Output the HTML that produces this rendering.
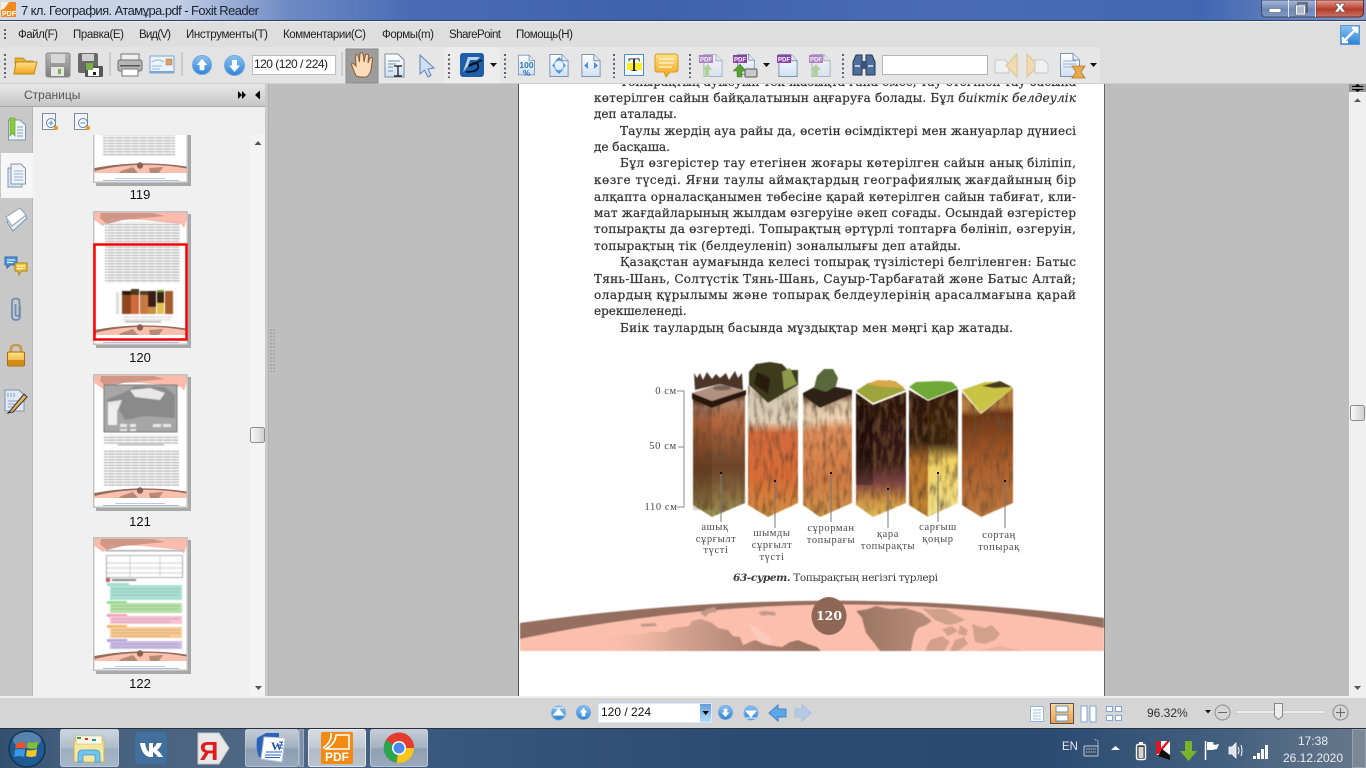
<!DOCTYPE html>
<html lang="ru"><head><meta charset="utf-8"><title>Foxit Reader</title>
<style>
html,body{margin:0;padding:0;width:1366px;height:768px;overflow:hidden;background:#bebebe}
svg{position:absolute;left:0;top:0;display:block;font-family:"Liberation Sans","DejaVu Sans",sans-serif}
.m{font-size:11.5px;fill:#222}
.p{font-family:"DejaVu Serif","Liberation Serif",serif;font-size:12px;fill:#333;stroke:#333;stroke-width:.22px}
.s{font-family:"Liberation Serif","DejaVu Serif",serif;font-size:10.5px;fill:#4a4a4a;text-anchor:middle;letter-spacing:.6px}
.n{font-size:13px;fill:#111;text-anchor:middle}
</style></head><body>
<svg width="1366" height="768" viewBox="0 0 1366 768" xmlns="http://www.w3.org/2000/svg">
<defs>
<linearGradient id="tb" x1="0" x2="1" y1="0" y2="0"><stop offset="0" stop-color="#d3dbea"/><stop offset=".13" stop-color="#c3cfe5"/><stop offset=".21" stop-color="#6f8bc4"/><stop offset=".3" stop-color="#4a6cb6"/><stop offset=".47" stop-color="#3f62ad"/><stop offset=".7" stop-color="#4a6cb7"/><stop offset=".88" stop-color="#4167b3"/><stop offset="1" stop-color="#8097c5"/></linearGradient>
<linearGradient id="hd" x1="0" x2="0" y1="0" y2="1"><stop offset="0" stop-color="#e8e8e8"/><stop offset="1" stop-color="#c6c6c6"/></linearGradient>
<linearGradient id="tk" x1="0" x2="1" y1="0" y2="0"><stop offset="0" stop-color="#33506f"/><stop offset=".05" stop-color="#455f7d"/><stop offset=".2" stop-color="#4f6884"/><stop offset=".33" stop-color="#38577f"/><stop offset=".55" stop-color="#2c4a72"/><stop offset=".76" stop-color="#2b4a72"/><stop offset=".9" stop-color="#44607f"/><stop offset="1" stop-color="#69798b"/></linearGradient>
<linearGradient id="gl" x1="0" x2="0" y1="0" y2="1"><stop offset="0" stop-color="#fff" stop-opacity=".55"/><stop offset=".5" stop-color="#fff" stop-opacity=".28"/><stop offset=".52" stop-color="#fff" stop-opacity=".12"/><stop offset="1" stop-color="#fff" stop-opacity=".22"/></linearGradient>
<linearGradient id="bl" x1="0" x2="0" y1="0" y2="1"><stop offset="0" stop-color="#8cc2f2"/><stop offset="1" stop-color="#2d83d8"/></linearGradient>
<linearGradient id="bl2" x1="0" x2="0" y1="0" y2="1"><stop offset="0" stop-color="#2f7fd0"/><stop offset="1" stop-color="#9fd0f6"/></linearGradient>
<linearGradient id="doc" x1="0" x2="0" y1="0" y2="1"><stop offset="0" stop-color="#fff"/><stop offset="1" stop-color="#cfe0f4"/></linearGradient>
<linearGradient id="yl" x1="0" x2="0" y1="0" y2="1"><stop offset="0" stop-color="#ffe28a"/><stop offset="1" stop-color="#efa51c"/></linearGradient>
<linearGradient id="gr" x1="0" x2="0" y1="0" y2="1"><stop offset="0" stop-color="#b6b6b6"/><stop offset="1" stop-color="#7d7d7d"/></linearGradient>
<linearGradient id="org" x1="0" x2="0" y1="0" y2="1"><stop offset="0" stop-color="#ffd79a"/><stop offset="1" stop-color="#f79b36"/></linearGradient>
<linearGradient id="cl" x1="0" x2="0" y1="0" y2="1"><stop offset="0" stop-color="#e2a49a"/><stop offset=".55" stop-color="#b63a2a"/><stop offset="1" stop-color="#c8766a"/></linearGradient>
<linearGradient id="wb" x1="0" x2="0" y1="0" y2="1"><stop offset="0" stop-color="#aabbdc"/><stop offset=".55" stop-color="#6e87b4"/><stop offset="1" stop-color="#7f99c8"/></linearGradient>
<linearGradient id="sb" x1="0" x2="1" y1="0" y2="0"><stop offset="0" stop-color="#fafafa"/><stop offset="1" stop-color="#cfcfcf"/></linearGradient>
<linearGradient id="land" x1="0" x2="1" y1="0" y2="0"><stop offset="0" stop-color="#fbbfae" stop-opacity=".1"/><stop offset=".35" stop-color="#d8a593"/><stop offset=".75" stop-color="#a97d6c"/><stop offset="1" stop-color="#96705f"/></linearGradient>
<linearGradient id="gld" x1="0" x2="1" y1="0" y2="0"><stop offset="0" stop-color="#9c7463"/><stop offset="1" stop-color="#b88e7c"/></linearGradient>
<linearGradient id="c1" x1="0" x2="0" y1="0" y2="1"><stop offset="0" stop-color="#3a1d10"/><stop offset=".08" stop-color="#b0826a"/><stop offset=".22" stop-color="#b5683f"/><stop offset=".6" stop-color="#6d4429"/><stop offset=".85" stop-color="#8c7443"/><stop offset="1" stop-color="#a09a5c"/></linearGradient>
<linearGradient id="c2" x1="0" x2="0" y1="0" y2="1"><stop offset="0" stop-color="#cfc4ac"/><stop offset=".28" stop-color="#dfd0b8"/><stop offset=".36" stop-color="#d36b3c"/><stop offset=".7" stop-color="#d96d37"/><stop offset="1" stop-color="#d39040"/></linearGradient>
<linearGradient id="c3" x1="0" x2="0" y1="0" y2="1"><stop offset="0" stop-color="#5d4028"/><stop offset=".08" stop-color="#dcc2a4"/><stop offset=".2" stop-color="#efd7b8"/><stop offset=".3" stop-color="#dc8b58"/><stop offset=".7" stop-color="#d17c45"/><stop offset="1" stop-color="#cf9548"/></linearGradient>
<linearGradient id="c4" x1="0" x2="0" y1="0" y2="1"><stop offset="0" stop-color="#2b1410"/><stop offset=".55" stop-color="#331a14"/><stop offset=".72" stop-color="#7d4146"/><stop offset=".85" stop-color="#c98c42"/><stop offset="1" stop-color="#e0bb55"/></linearGradient>
<linearGradient id="c5a" x1="0" x2="0" y1="0" y2="1"><stop offset="0" stop-color="#2c180c"/><stop offset=".4" stop-color="#2f1a0d"/><stop offset=".55" stop-color="#b47028"/><stop offset="1" stop-color="#c88a35"/></linearGradient>
<linearGradient id="c5b" x1="0" x2="0" y1="0" y2="1"><stop offset="0" stop-color="#331d10"/><stop offset=".42" stop-color="#3a2210"/><stop offset=".55" stop-color="#f0d060"/><stop offset="1" stop-color="#efe08a"/></linearGradient>
<linearGradient id="c6" x1="0" x2="0" y1="0" y2="1"><stop offset="0" stop-color="#b9803c"/><stop offset=".14" stop-color="#b17a3c"/><stop offset=".2" stop-color="#6d3516"/><stop offset=".55" stop-color="#a95c2a"/><stop offset="1" stop-color="#c27b40"/></linearGradient>
<filter id="soil" x="0" y="0" width="1" height="1"><feTurbulence type="fractalNoise" baseFrequency=".22 .06" numOctaves="3" seed="4" result="t"/><feColorMatrix in="t" type="matrix" values="0 0 0 0 .15  0 0 0 0 .07  0 0 0 0 .03  2.2 0 0 0 -.95" result="d"/><feComposite in="d" in2="SourceGraphic" operator="in" result="c"/><feMerge><feMergeNode in="SourceGraphic"/><feMergeNode in="c"/></feMerge></filter>
<filter id="bt"><feGaussianBlur stdDeviation=".3"/></filter>
<filter id="b1"><feGaussianBlur stdDeviation=".55"/></filter>
<pattern id="tl" width="8" height="2.800" patternUnits="userSpaceOnUse"><rect width="8" height="1.200" fill="#7a7a7a" opacity=".62"/><rect x="3" y="0" width=".8" height="1.200" fill="#fff" opacity=".55"/></pattern>
<symbol id="th" width="100" height="142" viewBox="0 0 100 142" overflow="visible">
<rect x="3" y="3" width="95" height="134" fill="#a8a8a8"/><rect x="0" y="0" width="95" height="134" fill="#c2c2c2"/><rect x="1.500" y="1.500" width="92" height="131" fill="#fff"/>
<path d="M1.500 1.500H93.500V9L91 17L88 13L50 9L18 8L10 15L1.500 9Z" fill="#fcbcad"/><path d="M8 2H60L72 5L30 9L14 13L7 7Z" fill="#c88f7f" opacity=".85"/>
<path d="M1.500 119Q47 111 93.500 118V124H1.500Z" fill="#fbbfae"/><path d="M1.500 119Q47 110.500 93.500 117.500V119.500Q47 111 1.500 122Z" fill="#946d5d"/><circle cx="47" cy="116.500" r="3.200" fill="#8a6052"/><path d="M28 122L40 118L45 124H26ZM56 119L70 118L66 124H57Z" fill="#b78a78"/>
<rect x="22" y="129" width="50" height=".8" fill="#8a9fd0" opacity=".7"/><rect x="10" y="131" width="76" height="1" fill="#8a9fd0" opacity=".7"/>
</symbol>
<symbol id="cu" width="21" height="21" viewBox="0 0 21 21"><circle cx="10.500" cy="10.500" r="10" fill="url(#bl)" stroke="#72a8dc"/><path d="M10.500 4L16 10.500H13V16H8V10.500H5Z" fill="#fff"/></symbol>
<symbol id="cd" width="21" height="21" viewBox="0 0 21 21"><circle cx="10.500" cy="10.500" r="10" fill="url(#bl)" stroke="#72a8dc"/><path d="M10.500 17L16 10.500H13V5H8V10.500H5Z" fill="#fff"/></symbol>
<symbol id="pg" width="20" height="24" viewBox="0 0 20 24"><path d="M.5 .5H13L19.500 7V23.500H.5Z" fill="url(#doc)" stroke="#7c93b2"/><path d="M13 .5V7H19.500" fill="#dfe8f4" stroke="#7c93b2"/></symbol>
<symbol id="pdfb" width="26" height="14" viewBox="0 0 26 14"><rect width="14" height="8" x="0" y="0" fill="#8a3fa8"/><text x="7" y="6.500" font-size="6" font-weight="bold" fill="#fff" text-anchor="middle">PDF</text></symbol>
</defs>

<rect width="1366" height="768" fill="#bebebe"/>

<!-- document page -->
<rect x="518" y="83" width="587" height="615" fill="#fff"/>
<rect x="518" y="83" width="1" height="615" fill="#555"/><rect x="1104" y="83" width="1" height="615" fill="#666"/>

<g filter="url(#bt)">
<text class="p" x="620" y="86" textLength="456">Топырақтың ауысуын тек жазықта ғана емес, тау етегінен тау басына</text>
<text class="p" x="594" y="102" textLength="482">көтерілген сайын  байқалатынын аңғаруға болады. Бұл <tspan font-style="italic">биіктік белдеулік</tspan></text>
<text class="p" x="594" y="118">деп аталады.</text>
<text class="p" x="620" y="135" textLength="456">Таулы жердің ауа райы да, өсетін өсімдіктері мен жануарлар дүниесі</text>
<text class="p" x="594" y="151">де басқаша.</text>
<text class="p" x="620" y="167" textLength="456">Бұл өзгерістер тау етегінен жоғары көтерілген сайын анық біліпіп,</text>
<text class="p" x="594" y="184" textLength="482">көзге түседі. Яғни таулы аймақтардың географиялық жағдайының бір</text>
<text class="p" x="594" y="201" textLength="482">алқапта орналасқанымен төбесіне қарай көтерілген сайын табиғат, кли-</text>
<text class="p" x="594" y="217" textLength="482">мат жағдайларының жылдам өзгеруіне әкеп соғады. Осындай өзгерістер</text>
<text class="p" x="594" y="233" textLength="482">топырақты да өзгертеді. Топырақтың әртүрлі топтарға бөлініп, өзгеруін,</text>
<text class="p" x="594" y="250" textLength="367">топырақтың тік (белдеуленіп) зоналылығы деп атайды.</text>
<text class="p" x="620" y="266" textLength="456">Қазақстан аумағында келесі топырақ түзілістері белгіленген: Батыс</text>
<text class="p" x="594" y="283" textLength="482">Тянь-Шань, Солтүстік Тянь-Шань, Сауыр-Тарбағатай және Батыс Алтай;</text>
<text class="p" x="594" y="299" textLength="482">олардың  құрылымы және топырақ белдеулерінің арасалмағына қарай</text>
<text class="p" x="594" y="315">ерекшеленеді.</text>
<text class="p" x="620" y="332" textLength="393">Биік таулардың басында мұздықтар мен мәңгі қар жатады.</text>
</g>

<!-- soil figure -->
<g filter="url(#b1)">
<g filter="url(#soil)">
<path d="M693 398L712 408V517L693 505Z" fill="url(#c1)"/><path d="M712 408L745 392V503L712 517Z" fill="url(#c1)"/>
<path d="M748 385L768 402V517L748 505Z" fill="url(#c2)"/><path d="M768 402L798 385V503L768 517Z" fill="url(#c2)"/>
<path d="M803 396L820 408V517L803 505Z" fill="url(#c3)"/><path d="M820 408L852 393V503L820 517Z" fill="url(#c3)"/>
<path d="M856 393L873 405V517L856 505Z" fill="url(#c4)"/><path d="M873 405L906 392V503L873 517Z" fill="url(#c4)"/>
<path d="M909 390L928 401V517L909 505Z" fill="url(#c5a)"/><path d="M928 401L958 389V503L928 517Z" fill="url(#c5b)"/>
<path d="M962 392L981 414V517L962 505Z" fill="url(#c6)"/><path d="M981 414L1013 388V503L981 517Z" fill="url(#c6)"/>
</g>
<rect x="693" y="400" width="19" height="110" fill="#301400" opacity=".18"/>
<rect x="856" y="405" width="17" height="80" fill="#0a0200" opacity=".3"/>
<path d="M692 393L720 384L746 391L712 405Z" fill="#b29080"/><path d="M692 393L712 401L746 390V395L712 408L692 399Z" fill="#2a170c"/>
<path d="M694 373L697 378L700 373L703 380L707 372L712 379L716 374L720 378L726 373L729 380L735 371L738 378L742 373L743 390L720 384L695 390Z" fill="#4c3428"/><ellipse cx="722" cy="388" rx="9" ry="2.500" fill="#7a6656"/>
<path d="M749 372L756 364L770 362L782 364L788 370L798 370L798 385L768 403L749 385Z" fill="#3c3a1c"/><path d="M782 372L790 368L797 384L784 390Z" fill="#8c9a4a"/><path d="M757 372L770 378L768 394L754 384Z" fill="#291b10"/>
<path d="M803 393L820 384L852 390V394L820 408L803 396Z" fill="#2f2412"/><path d="M814 388L817 376L824 369L833 369L838 378L836 386L826 392Z" fill="#58673a"/>
<path d="M856 391L868 383L890 380L906 390L873 403Z" fill="#9ca43a"/><path d="M866 384L878 380L895 381L905 388L885 387Z" fill="#d9a948"/>
<path d="M909 387L916 382L940 381L952 382L958 388L928 400Z" fill="#6fa838"/>
<path d="M962 390L985 382L1000 382L1013 388L981 413Z" fill="#c9c445"/><path d="M982 386L1000 381L1012 387L994 388Z" fill="#4b3d1a"/>
</g>
<g filter="url(#bt)">
<path d="M677 391H684V507H677M678 447H684" fill="none" stroke="#888" stroke-width="1"/>
<text class="s" x="666" y="394">0 см</text><text class="s" x="663" y="449">50 см</text><text class="s" x="661" y="510">110 см</text>
<path d="M721 473V522M775 481V528M831 473V522M888 489V528M938 473V522M1005 481V528" stroke="#777" stroke-width="1" fill="none"/>
<path d="M720 472h2v2h-2zM774 480h2v2h-2zM830 472h2v2h-2zM887 488h2v2h-2zM937 472h2v2h-2zM1004 480h2v2h-2z" fill="#111"/>
<text class="s" x="715" y="530">ашық</text><text class="s" x="716" y="542">сұрғылт</text><text class="s" x="716" y="553">түсті</text>
<text class="s" x="772" y="536">шымды</text><text class="s" x="772" y="548">сұрғылт</text><text class="s" x="772" y="560">түсті</text>
<text class="s" x="831" y="531">сұрорман</text><text class="s" x="831" y="543">топырағы</text>
<text class="s" x="888" y="537">қара</text><text class="s" x="888" y="549">топырақты</text>
<text class="s" x="938" y="530">сарғыш</text><text class="s" x="938" y="542">қоңыр</text>
<text class="s" x="999" y="538">сортаң</text><text class="s" x="999" y="550">топырақ</text>
<text x="733" y="581" font-family="'DejaVu Serif','Liberation Serif',serif" font-size="10.500" fill="#3a3a3a" textLength="205"><tspan font-style="italic" font-weight="bold">63-сурет.</tspan> Топырақтың негізгі түрлері</text>
</g>

<!-- page footer -->
<g filter="url(#b1)">
<path d="M520 623Q820 581 1104 618V651H520Z" fill="#fcbfae"/>
<path d="M520 623Q820 581 1104 618V628Q820 576 520 639Z" fill="#946e5e"/>
<path d="M596 640L612 636L627 634L640 635L650 632L666 632L672 628L689 626L692 621L701 619L712 623L718 628L728 630L733 636L740 637L743 645L755 640L768 645L782 647L790 642L798 640L808 644L817 647L821 651H596Z" fill="url(#land)"/>
<path d="M856 611L868 609L876 606L890 609L905 608L922 613L932 621L926 625L918 628L915 633L913 640L911 651H880L874 643L866 633L864 626L862 618Z" fill="url(#gld)"/>
<path d="M922 608L930 609L945 609L958 616L965 620L955 624L948 625L935 620Z" fill="#cfa08c"/>
<path d="M942 629L952 626L958 631L948 636ZM960 625L968 630L966 636L958 634ZM930 640L942 636L950 642L944 651H925ZM955 640L964 637L968 644L958 651H950ZM972 624L984 628L992 625L1000 634L995 640L985 644L975 642Z" fill="#d3a08d"/>
<path d="M975 651L1000 646L1015 649L1022 651Z" fill="#eab3a0"/>
<path d="M700 613L707 609L715 607L717 612L710 613L705 617ZM758 612L766 611L775 612L776 616L768 615L762 616ZM640 624L655 623L657 626L642 627Z" fill="#c39a88"/>
<path d="M748 624L758 628L770 638L772 645L762 645L754 634Z" fill="#fff" opacity=".18"/>
</g>
<ellipse cx="829" cy="616" rx="17.500" ry="19" fill="#8f6757"/>
<text x="829" y="620" font-family="'DejaVu Serif','Liberation Serif',serif" font-weight="bold" font-size="12.500" fill="#fff" text-anchor="middle">120</text>

<!-- right scrollbar -->
<rect x="1349" y="83" width="17" height="615" fill="#efefef"/>
<rect x="1349" y="83" width="17" height="9" fill="#959595"/>
<path d="M1352 86.500H1363M1352 89.500H1363" stroke="#000"/><path d="M1357.500 84L1355 86H1360ZM1357.500 92L1355 90H1360Z" fill="#000"/>
<path d="M1357.500 98.500L1361 102H1354Z" fill="#555"/><path d="M1354 686H1361L1357.500 690Z" fill="#555"/>
<rect x="1350.500" y="405.500" width="14" height="15" rx="2" fill="url(#sb)" stroke="#8d8d8d"/>

<!-- splitter -->
<rect x="265" y="83" width="3" height="615" fill="#c8c8c8"/><rect x="268" y="83" width="1" height="615" fill="#b0b0b0"/>
<path d="M271 329V372M274 329V372" stroke="#8a8a8a" stroke-dasharray="1.500 2"/>

<!-- left panel -->
<rect x="0" y="106" width="33" height="592" fill="#c8c8c8"/>
<rect x="33" y="106" width="232" height="590" fill="#f0f0f0"/>
<rect x="32" y="106" width="1" height="590" fill="#b4b4b4"/>
<rect x="250" y="135" width="15" height="561" fill="#f4f4f4"/>

<use href="#th" x="93" y="49" width="100" height="142"/>
<use href="#th" x="93" y="211" width="100" height="142"/>
<use href="#th" x="93" y="374" width="100" height="142"/>
<use href="#th" x="93" y="537" width="100" height="142"/>
<g filter="url(#b1)">
<rect x="103" y="135" width="72" height="21" fill="url(#tl)"/>
<rect x="105" y="222" width="75" height="61" fill="url(#tl)"/>
</g>
<!-- thumb 120 image -->
<g filter="url(#b1)">
<rect x="122" y="291" width="9" height="23" fill="#8d4a22"/><rect x="122" y="291" width="9" height="4" fill="#2a1a10"/>
<rect x="131" y="289" width="8" height="25" fill="#cf6a3a"/><rect x="131" y="289" width="8" height="6" fill="#4a3a20"/>
<rect x="140" y="291" width="8" height="23" fill="#c67a42"/><rect x="140" y="291" width="8" height="4" fill="#4c4020"/>
<rect x="148" y="291" width="8" height="23" fill="#3a1c12"/><rect x="148" y="307" width="8" height="7" fill="#c89040"/>
<rect x="157" y="291" width="7" height="23" fill="#3a2010"/><rect x="157" y="303" width="7" height="11" fill="#e0c050"/><rect x="157" y="290" width="7" height="2" fill="#6fa030"/>
<rect x="165" y="291" width="8" height="23" fill="#a55c2a"/>
<rect x="116" y="292" width="3" height="22" fill="#ddd"/>
<rect x="122" y="316" width="50" height="5" fill="url(#tl)" opacity=".5"/>
<rect x="125" y="321" width="36" height="1.500" fill="#888" opacity=".6"/>
</g>
<rect x="94.500" y="244.500" width="92" height="95" fill="none" stroke="#f00" stroke-width="2.500"/>
<!-- thumb 121 -->
<g filter="url(#b1)">
<rect x="104" y="385" width="73" height="47" fill="#a6a6a6" stroke="#777"/>
<path d="M106 400L125 392L135 386L165 387L175 395V418L145 416L125 420L118 408Z" fill="#8a8a8a"/>
<path d="M130 390L150 388L165 393L160 400L135 397ZM108 402L122 400L118 410H108Z" fill="#e8e8e8"/>
<path d="M108 405H117V425H108Z" fill="#eee"/>
<path d="M120 424h7v3h-7zM130 424h6v3h-6zM153 424h8v3h-8zM163 424h8v3h-8zM120 429h7v2h-7zM130 429h6v2h-6z" fill="#e8e8e8"/>
<rect x="104" y="435" width="74" height="10" fill="url(#tl)"/>
<rect x="118" y="444" width="46" height="1.500" fill="#777" opacity=".5"/>
<rect x="104" y="450" width="75" height="37" fill="url(#tl)"/>
</g>
<!-- thumb 122 -->
<g filter="url(#b1)">
<rect x="105" y="550" width="78" height="1.500" fill="#888" opacity=".7"/>
<rect x="106.500" y="555.500" width="76" height="22" fill="#fff" stroke="#aaa"/>
<path d="M130 556V577M160 556V577M107 563H182M107 568H182M107 573H182" stroke="#bbb" stroke-width=".7"/>
<rect x="106" y="578" width="4" height="4" fill="#c06060"/><rect x="112" y="579" width="24" height="2" fill="#888"/>
<rect x="107" y="583" width="22" height="3" fill="#a3dccb"/><rect x="110" y="585" width="72" height="15" fill="#a9e2d4"/>
<rect x="107" y="601" width="20" height="3" fill="#8fdc86"/><rect x="110" y="603" width="72" height="10" fill="#b5e2a6"/>
<rect x="107" y="614" width="20" height="3" fill="#f59cc0"/><rect x="110" y="616" width="72" height="8" fill="#f9bfd2"/>
<rect x="107" y="625" width="20" height="3" fill="#f0b868"/><rect x="110" y="627" width="72" height="11" fill="#fccb90"/>
<rect x="107" y="639" width="20" height="3" fill="#b8a2e0"/><rect x="110" y="641" width="72" height="8" fill="#cbbbe6"/>
<path d="M112 589H180M112 592H180M112 595H178M112 606H180M112 609H178M112 619H180M112 622H170M112 630H180M112 633H180M112 636H170M112 644H178M112 647H178" stroke="#666" stroke-width=".8" opacity=".4"/>
</g>
<text class="n" x="140" y="199">119</text><text class="n" x="140" y="362">120</text><text class="n" x="140" y="526">121</text><text class="n" x="140" y="688">122</text>
<!-- panel toolbar -->
<rect x="33" y="106" width="232" height="29" fill="#efefef"/>
<g>
<rect x="42.500" y="113.500" width="13" height="16" fill="#f4f6fa" stroke="#7b8b9f"/><circle cx="51" cy="123" r="4.500" fill="#fff" stroke="#5b84b0"/><path d="M48.500 123H53.500M51 120.500V125.500" stroke="#3a8ad0"/><circle cx="56" cy="128" r="2.200" fill="#f09a20"/>
<rect x="74.500" y="113.500" width="13" height="16" fill="#f4f6fa" stroke="#7b8b9f"/><circle cx="83" cy="123" r="4.500" fill="#fff" stroke="#5b84b0"/><path d="M80.500 123H85.500" stroke="#3a8ad0"/><circle cx="88" cy="128" r="2.200" fill="#f09a20"/>
</g>
<path d="M258 141L261.500 145H254.500Z" fill="#555"/>
<path d="M255 686H262L258.500 690Z" fill="#555"/>
<rect x="250.500" y="427.500" width="14" height="15" rx="2" fill="url(#sb)" stroke="#8d8d8d"/>
<!-- tabs -->
<rect x="1" y="153" width="32" height="45" fill="#f6f6f6"/>
<path d="M8.500 120H20L25.500 125V140H8.500Z" fill="#eef3fa" stroke="#8295ad"/><path d="M10 118H15V136L12.500 133L10 136Z" fill="#88cc3a" stroke="#5d9c24" stroke-width=".6"/><path d="M17 127H23M17 130H23M17 133H23M17 136H23" stroke="#8aa0bf"/>
<path d="M8 168H19L22 171V187H8Z" fill="#dce5f2" stroke="#8295ad"/><path d="M11 164H21L25.500 168.500V184H11Z" fill="#eef3fa" stroke="#8295ad"/><path d="M14 171H23M14 174H23M14 177H23M14 180H23" stroke="#9ab0cc"/>
<path d="M7 222L21 209L27 218L13 231Z" fill="#e6edf6" stroke="#8295ad"/><path d="M6 217L20 208L26 215L12 226Z" fill="#fff" stroke="#8d9db2"/>
<path d="M5 257H17V265H10L7 268V265H5Z" fill="#4d94dd" stroke="#2f6db0"/><path d="M7 260H15M7 262.500H13" stroke="#fff"/><path d="M15 263H27V271H21L19 275L18 271H15Z" fill="#f2c53a" stroke="#a8841a"/><path d="M17 266H25M17 268.500H23" stroke="#fff"/>
<path d="M20 306V316Q20 320 16 320Q12 320 12 316V302Q12 298.500 16 298.500Q19.500 298.500 19.500 302V314Q19.500 316 17.500 316Q15.500 316 15.500 314V304" fill="none" stroke="#6c8eb3" stroke-width="1.800"/>
<path d="M11 353V349Q11 345 16 345Q21 345 21 349V353" fill="none" stroke="#c79a44" stroke-width="2.500"/><rect x="7.500" y="352" width="17" height="14" rx="1.500" fill="url(#yl)" stroke="#a86a0d"/><rect x="8" y="360" width="16" height="5" fill="#c27a10" opacity=".7"/>
<path d="M5 390H19L24 395V411H5Z" fill="#dfe8f4" stroke="#7f94ae"/><path d="M8 393V397M11 393V397M14 393V397M8 401H19M8 404H15M8 407H17" stroke="#8aa0bf"/><path d="M10 411L24 394L27 397L13 412L8 413Z" fill="#e8b552" stroke="#334"/>

<!-- panel header -->
<rect x="0" y="84" width="265" height="22" fill="url(#hd)"/><rect x="0" y="106" width="265" height="1" fill="#a8a8a8"/>
<text x="24" y="99" font-size="12" fill="#555">Страницы</text>
<path d="M238 91L242 95L238 99ZM242 91L246 95L242 99ZM260 90.500L255 95L260 99.500Z" fill="#000"/>

<!-- bars -->
<rect x="0" y="0" width="1366" height="20" fill="url(#tb)"/>
<rect x="0" y="20" width="1366" height="1" fill="#2e3f66"/><rect x="0" y="21" width="1366" height="1" fill="#eef0f4"/>
<rect x="0" y="22" width="1366" height="61" fill="#dedede"/>
<rect x="0" y="47" width="1100" height="36" rx="3" fill="#e6e6e6"/>
<rect x="0" y="47" width="338" height="36" rx="3" fill="#e3e3e3"/>
<rect x="444" y="47" width="56" height="36" rx="3" fill="#ececec"/>
<rect x="0" y="83" width="1366" height="1" fill="#cfcfcf"/>

<!-- title -->
<rect x="1" y="2" width="15" height="15" fill="#f28b1e"/><path d="M9 2L4 9L1 10V2Z" fill="#fff" opacity=".85"/><text x="2" y="16" font-size="7" font-weight="bold" fill="#fff">PDF</text>
<text x="21" y="15" font-size="13" fill="#1a2130" textLength="238">7 кл. География. Атамұра.pdf - Foxit Reader</text>
<!-- window buttons -->
<path d="M1261.500 0V12Q1261.500 17 1266 17H1358Q1363.500 17 1363.500 12V0Z" fill="url(#wb)" stroke="#3d4a68"/>
<path d="M1316 0H1363.500V12Q1363.500 17 1358 17H1316Z" fill="url(#cl)" stroke="#6b2a2a"/>
<path d="M1288.500 0V17M1315.500 0V17" stroke="#e2e8f4"/>
<rect x="1269" y="8.500" width="12" height="4" rx="1" fill="#fff" stroke="#555" stroke-width=".6"/>
<rect x="1298" y="3" width="9" height="9" fill="none" stroke="#333"/><rect x="1296" y="5.500" width="9" height="9" fill="#aab8d4" stroke="#fff" stroke-width="1.800"/><rect x="1295.500" y="5" width="10" height="10" fill="none" stroke="#333" stroke-width=".6"/>
<path d="M1335 3.500H1339L1340 5.500L1341 3.500H1345L1342 7.500L1345.500 12H1341.500L1340 9.500L1338.500 12H1334.500L1338 7.500Z" fill="#fff" stroke="#555" stroke-width=".6"/>

<!-- menu -->
<path d="M5 29v2M5 33v2M5 37v2" stroke="#444" stroke-width="1.600"/>
<text class="m" x="18" y="38" textLength="40">Файл(F)</text>
<text class="m" x="73" y="38" textLength="51">Правка(E)</text>
<text class="m" x="139" y="38" textLength="32">Вид(V)</text>
<text class="m" x="186" y="38" textLength="82">Инструменты(T)</text>
<text class="m" x="283" y="38" textLength="83">Комментарии(C)</text>
<text class="m" x="382" y="38" textLength="52">Формы(m)</text>
<text class="m" x="449" y="38" textLength="52">SharePoint</text>
<text class="m" x="516" y="38" textLength="57">Помощь(H)</text>
<rect x="1340.500" y="25.500" width="19" height="19" fill="url(#bl)" stroke="#5b96d4"/><path d="M1350 35L1357 28M1352 28H1357V33M1350 35L1343 42M1343 37V42H1348" stroke="#fff" stroke-width="2.500" fill="none"/>

<!-- toolbar -->
<path d="M5 54V78M449 54V78M505 54V78M614 54V78M690 54V78M843 54V78" stroke="#33404f" stroke-dasharray="2 2.500" stroke-width="1.600"/>
<path d="M110 52V76M182 52V76M342 52V76" stroke="#b3b3b3"/>
<path d="M15 58H23L26 61H33V64H15Z" fill="#e8b030" stroke="#b8860f" stroke-width=".7"/><path d="M14 74L16 62H37L34 74Z" fill="url(#yl)" stroke="#c08a15"/>
<rect x="46" y="53" width="24" height="24" rx="2" fill="url(#gr)" stroke="#8a8a8a"/><rect x="51" y="54" width="14" height="9" fill="#d8d8d8"/><rect x="51" y="67" width="13" height="9" fill="#e6e6e6"/><rect x="58" y="69" width="3" height="5" fill="#7bb046"/>
<rect x="78" y="53" width="20" height="20" rx="2" fill="#6a6a6a"/><rect x="82" y="54" width="12" height="7" fill="#cfcfcf"/><rect x="85" y="66" width="18" height="11" rx="1" fill="#555"/><rect x="88" y="68" width="11" height="8" fill="#fff"/><rect x="86" y="63" width="7" height="7" fill="#7bb046"/><rect x="93" y="72" width="3" height="3" fill="#222"/>
<rect x="121" y="54" width="18" height="7" fill="#efefef" stroke="#777"/><rect x="118" y="60" width="24" height="11" rx="2" fill="#b5b5b5" stroke="#6e6e6e"/><rect x="122" y="69" width="16" height="7" fill="#fff" stroke="#777"/><rect x="120" y="65" width="20" height="1.500" fill="#555"/>
<rect x="150" y="56" width="24" height="17" fill="#eaf2fb" stroke="#7ea4d2"/><rect x="166" y="59" width="6" height="6" fill="#d9a070" stroke="#b07040" stroke-width=".5"/><path d="M152 62Q158 58 164 62M152 66H162M152 69H160" stroke="#9ab5d6" fill="none"/><rect x="150" y="71" width="24" height="2" fill="#7ea4d2"/>
<use href="#cu" x="192" y="55" width="20" height="20"/><use href="#cd" x="224" y="55" width="21" height="21"/>
<rect x="252.500" y="55.500" width="83" height="19" fill="#fff" stroke="#bdbdbd"/><text x="254" y="68" font-size="12" fill="#222" textLength="74">120 (120 / 224)</text>
<rect x="346" y="49" width="32" height="34" fill="#9d9d9d" stroke="#8a8a8a"/>
<path d="M356 76L352 66Q351 63 353 63L356 66L355.500 56Q356 54 358 55L359.500 62L360 53.500Q361.500 52 363 53.500L364 62L365.500 54.500Q367 53.500 368.500 55L368 63L370 58Q372 57 372.500 59L371 70Q369 76 366 77H360Z" fill="#fbdcb8" stroke="#8a5a36"/>
<path d="M385 54H398L404 60V77H385Z" fill="url(#doc)" stroke="#7c8da3"/><path d="M388 61H400M388 64H396M388 67H393M388 71H393" stroke="#7c8da3"/><path d="M394 66H402M398 66V76M394 76H402" stroke="#111" stroke-width="1.200"/>
<path d="M420 55V74L424.500 70L428 77L431 75.500L428 69L434 68Z" fill="#cfe0f5" stroke="#5e84b4"/>
<rect x="460" y="53" width="24" height="24" rx="3" fill="#1f5ea8"/><path d="M463 72L468 57H480L477 60H470L468 66" fill="#dbe7f4" opacity=".85"/><path d="M466 72Q480 72 478 65Q476 61 470 65Q466 68 482 60" stroke="#0c1420" stroke-width="1.800" fill="none"/>
<path d="M490 63H497L493.500 67Z" fill="#111"/>
<use href="#pg" x="518" y="54" width="17" height="22"/><text x="526.500" y="68" font-size="8.500" font-weight="bold" fill="#2a72c4" text-anchor="middle">100</text><text x="526.500" y="76" font-size="8" font-weight="bold" fill="#2a72c4" text-anchor="middle">%</text>
<use href="#pg" x="549" y="54" width="20" height="23"/><path d="M559 57L563 61H555ZM559 74L555 70H563ZM552 65.500L555 62.500V68.500ZM566 65.500L563 62.500V68.500Z" fill="#4d90d8"/><circle cx="559" cy="65.500" r="5" fill="none" stroke="#7fb2e6"/>
<use href="#pg" x="581" y="54" width="20" height="23"/><path d="M584 65.500L588 62V69ZM598 65.500L594 62V69Z" fill="#4d90d8"/>
<rect x="624.500" y="54.500" width="19" height="21" fill="#f7fbff" stroke="#4a8ccc"/><rect x="627" y="63" width="15" height="7" fill="#ffef1a"/><text x="634" y="71" font-family="'Liberation Serif',serif" font-size="19" fill="#111" text-anchor="middle">T</text>
<path d="M657 54H675Q678 54 678 57V69Q678 72 675 72H670L666 77L664 72H657Q655 72 655 69V57Q655 54 657 54Z" fill="url(#yl)" stroke="#d69a1a"/><path d="M659 59H674M659 63H674M659 67H672" stroke="#fff"/>
<g opacity=".6"><use href="#pg" x="703" y="54" width="20" height="23"/><use href="#pdfb" x="699" y="55" width="26" height="14"/><path d="M705 77V70L702 70L708 64L712 70H709V77Z" fill="#8ec36a"/></g>
<use href="#pg" x="736" y="54" width="20" height="21"/><use href="#pdfb" x="733" y="55" width="26" height="14"/><path d="M737 77V71H733L740 64L746 71H742V77Z" fill="#58a030" stroke="#3e7a1c" stroke-width=".5"/><rect x="745" y="69" width="12" height="8" rx="1" fill="#c9c9c9" stroke="#555"/>
<path d="M763 63H770L766.500 67Z" fill="#111"/>
<use href="#pg" x="778" y="54" width="20" height="23"/><use href="#pdfb" x="777" y="55" width="26" height="14"/>
<g opacity=".6"><use href="#pg" x="811" y="54" width="20" height="23"/><use href="#pdfb" x="809" y="55" width="26" height="14"/><path d="M813 77V70H810L816 64L821 70H818V77Z" fill="#8ec36a"/></g>
<path d="M853 62L856 55H862V75H853ZM866 55H872L875 62V75H866Z" fill="#4e6e9c" stroke="#23375a"/><rect x="861" y="61" width="6" height="8" fill="#3a5478"/><path d="M855 66H860M868 66H873" stroke="#b8cce6" stroke-width="2"/>
<rect x="882.500" y="55.500" width="105" height="19" fill="#fff" stroke="#b5b5b5"/>
<g opacity=".75"><path d="M995 60H1005L1009 64V73H995Z" fill="#f2f4f7" stroke="#b8bfc8"/><path d="M1017 54L1006 65.500L1017 77Z" fill="#f3d6a0" stroke="#dcb877"/>
<path d="M1027 54L1038 65.500L1027 77Z" fill="#f3d6a0" stroke="#dcb877"/><path d="M1035 60H1044L1048 64V73H1035Z" fill="#f2f4f7" stroke="#b8bfc8"/></g>
<use href="#pg" x="1060" y="53" width="20" height="24"/><path d="M1063 61H1076M1063 64H1076M1063 67H1072" stroke="#9ab0cc"/><path d="M1072 66H1085L1081 72L1085 78H1072L1076 72Z" fill="#e8a850" stroke="#b07820" stroke-width=".8"/>
<path d="M1090 63H1097L1093.500 67Z" fill="#111"/>

<!-- status bar -->
<rect x="0" y="696" width="1366" height="2" fill="#ededed"/>
<rect x="0" y="698" width="1366" height="30" fill="#d5d5d5"/>
<circle cx="558.500" cy="713" r="7" fill="url(#bl)" stroke="#76aee2"/><path d="M553.500 708H563.500M558.500 709L563.500 715H553.500Z" fill="#fff" stroke="#fff"/>
<use href="#cu" x="576" y="705" width="15" height="15"/>
<rect x="598" y="703" width="114" height="20" fill="#fff" stroke="#b9d3ee"/><text x="601" y="716" font-size="12" fill="#111">120 / 224</text><rect x="700" y="704" width="11" height="18" fill="url(#bl2)" opacity=".75"/><path d="M702.500 711H709L705.700 715Z" fill="#000"/>
<use href="#cd" x="718" y="705" width="15" height="15"/>
<circle cx="751" cy="713" r="7" fill="url(#bl)" stroke="#76aee2"/><path d="M746 718H756M751 717L746 711H756Z" fill="#fff" stroke="#fff"/>
<path d="M769 713L778 705V709H786V717H778V721Z" fill="#5ea6ea" stroke="#3f86cf"/>
<path d="M811 713L802 705V709H795V717H802V721Z" fill="#b5cbe4" stroke="#a6bfdc"/>
<rect x="1030.500" y="706.500" width="13" height="15" fill="#fff" stroke="#8fb7e0"/><path d="M1033 710H1041M1033 713H1041M1033 716H1041M1033 719H1041" stroke="#9cc0e6"/>
<rect x="1050.500" y="703.500" width="23" height="20" fill="url(#org)" stroke="#4d5563"/><rect x="1056" y="706" width="12" height="6" fill="#fff" stroke="#5b8fc8"/><rect x="1056" y="715" width="12" height="6" fill="#fff" stroke="#5b8fc8"/>
<rect x="1081" y="706" width="6" height="16" fill="#fff" stroke="#7ea9d8"/><rect x="1090" y="706" width="6" height="16" fill="#fff" stroke="#7ea9d8"/>
<rect x="1106.500" y="706.500" width="6" height="5" fill="#fff" stroke="#7ea9d8"/><rect x="1115.500" y="706.500" width="6" height="5" fill="#fff" stroke="#7ea9d8"/><rect x="1106.500" y="715.500" width="6" height="5" fill="#fff" stroke="#7ea9d8"/><rect x="1115.500" y="715.500" width="6" height="5" fill="#fff" stroke="#7ea9d8"/>
<text x="1147" y="717" font-size="12" fill="#333">96.32%</text>
<path d="M1205 710H1211L1208 713.500Z" fill="#111"/>
<circle cx="1222.500" cy="712.500" r="7.500" fill="none" stroke="#8a8a8a"/><path d="M1218 712.500H1227" stroke="#666"/>
<rect x="1236" y="711" width="90" height="2" fill="#fff" stroke="#b0b0b0" stroke-width=".5"/>
<path d="M1274.500 703.500H1282.500V716L1278.500 719.500L1274.500 716Z" fill="#eee" stroke="#888"/>
<circle cx="1340.500" cy="712.500" r="7.500" fill="none" stroke="#8a8a8a"/><path d="M1336 712.500H1345M1340.500 708V717" stroke="#666"/>

<!-- taskbar -->
<rect x="0" y="728" width="1366" height="40" fill="url(#tk)"/><rect x="0" y="728" width="1366" height="1" fill="#272f3c"/>
<circle cx="27" cy="749" r="18" fill="#1f5a93" stroke="#113553" stroke-width="1.500"/><ellipse cx="27" cy="740" rx="14" ry="8" fill="#fff" opacity=".25"/>
<path d="M16 744Q21 741 26 743L25 749Q20 747 15 749Z" fill="#e8542e"/><path d="M28 742Q33 744 38 741L37 748Q32 750 27 748Z" fill="#7fbf2e"/><path d="M15 750Q20 748 25 750L24 757Q19 755 14 757Z" fill="#3a9ae8"/><path d="M27 750Q32 751 37 749L36 756Q31 758 26 756Z" fill="#f6c624"/>
<rect x="60.500" y="729.500" width="58" height="37" rx="2" fill="#8ea3b8" stroke="#c7d0d9" stroke-opacity=".8"/><rect x="60.500" y="729.500" width="58" height="37" rx="2" fill="url(#gl)"/>
<path d="M74 740H104V762H74Z" fill="#f4e7a0" stroke="#c9b264"/><path d="M76 736H102V744H76Z" fill="#fffbe2" stroke="#c9b264" stroke-width=".6"/><path d="M77 737h4v2h-4z" fill="#3aa040"/><path d="M85 738h3v2h-3z" fill="#cc3030"/><path d="M92 739h4v2h-4z" fill="#2a8ad0"/>
<path d="M78 762V755Q78 750 82 750H96Q100 750 100 755V762H95V755H83V762Z" fill="#72c4ee" stroke="#3a92c8" stroke-width=".7"/>
<rect x="135" y="732" width="32" height="32" rx="4" fill="#41709f"/>
<path d="M140 743H145Q146 750 149 752V743H153V748Q155 747 157 743H162Q160 748 157 750Q160 752 163 757H158Q155 753 153 752V757H150Q142 756 140 743Z" fill="#fff"/>
<path d="M198 733H219L229 748L219 764H198Z" fill="#e8e8e8" stroke="#c4c4c4"/><text x="209" y="760" font-size="26" font-weight="bold" fill="#e31b1b" text-anchor="middle">Я</text>
<rect x="245.500" y="729.500" width="53" height="37" rx="2" fill="#7b90a8" stroke="#c7d0d9" stroke-opacity=".7"/><rect x="245.500" y="729.500" width="53" height="37" rx="2" fill="url(#gl)"/>
<rect x="299.500" y="729.500" width="4" height="37" fill="#7b90a8" stroke="#c7d0d9" stroke-opacity=".6"/>
<path d="M257 738L266 733H279V760L264 760Q255 758 257 738Z" fill="#2b62b8"/><path d="M264 737L285 738L282 762L261 759Z" fill="#fff" stroke="#b8c6da"/><text x="271" y="750" font-size="12" font-weight="bold" fill="#1f4fa8" font-family="'Liberation Serif',serif">W</text><path d="M279 742H283M279 745H283M279 748H283M266 752H282M265 755H281M265 757.500H280" stroke="#2b62b8"/>
<rect x="308.500" y="729.500" width="57" height="37" rx="2" fill="#a7b3bf" stroke="#e0e5ea"/><rect x="308.500" y="729.500" width="57" height="37" rx="2" fill="url(#gl)"/>
<rect x="321" y="732" width="32" height="32" rx="2" fill="#f28a14"/><path d="M336 735H349V749H325Q335 745 336 735Z" fill="none" stroke="#fff" stroke-width="1.600"/><path d="M331 733Q332 742 323 748" fill="none" stroke="#fff" stroke-width="1.600"/><text x="337" y="761" font-size="12" font-weight="bold" fill="#fff" text-anchor="middle">PDF</text>
<rect x="370.500" y="729.500" width="57" height="37" rx="2" fill="#7f92a8" stroke="#c7d0d9" stroke-opacity=".8"/><rect x="370.500" y="729.500" width="57" height="37" rx="2" fill="url(#gl)"/>
<circle cx="399" cy="748" r="15" fill="#e33b2e"/><path d="M399 748L386 740A15 15 0 0 0 396.500 762.800Z" fill="#2ea44f"/><path d="M399 748L396.500 762.800A15 15 0 0 0 414 748Z" fill="#f8c51b"/><path d="M399 748L414 748A15 15 0 0 0 386 740Z" fill="#e33b2e"/>
<circle cx="399" cy="748" r="7" fill="#fff"/><circle cx="399" cy="748" r="5.500" fill="#4a8be8"/>
<text x="1062" y="750" font-size="11.500" fill="#e6e9ee">EN</text>
<rect x="1084" y="746" width="14" height="10" rx="1" fill="none" stroke="#c5c8c8"/><path d="M1086 749H1096M1086 752H1096M1098 746V741L1094 739" stroke="#c5c8c8" fill="none" stroke-dasharray="1.500 .8"/>
<path d="M1115.500 746L1120 750H1111Z" fill="#fff"/>
<rect x="1136.500" y="744.500" width="9" height="15" rx="1.500" fill="#444" stroke="#fff" stroke-width="1.400"/><rect x="1139" y="742" width="4" height="2" fill="#fff"/><rect x="1138.500" y="747" width="5" height="11" fill="#d5d5d5"/>
<rect x="1156" y="741" width="14" height="14" fill="#fff"/><path d="M1156 741H1161V748L1167 741H1170L1160 753L1156 755Z" fill="#e01622"/><path d="M1162 749L1170 755V760L1158 756Z" fill="#111"/>
<path d="M1185 741H1192V751H1197L1188.500 761L1180 751H1185Z" fill="#79b52a"/>
<path d="M1205.500 741V760" stroke="#fff" stroke-width="1.500"/><path d="M1207 742H1213L1214 745L1219 744L1217 749L1212 750L1207 750Z" fill="#fff"/>
<path d="M1229 747H1232L1236 743V758L1232 754H1229Z" fill="#dfe3e8" stroke="#fff" stroke-width=".8"/><path d="M1238 747Q1240 750.500 1238 754M1241 745Q1243 750.500 1241 756" stroke="#fff" fill="none"/>
<path d="M1253 756h3v3h-3zM1257 753h3v6h-3zM1261 749h3v10h-3zM1265 745h3v14h-3z" fill="#fff"/>
<text x="1313" y="745" font-size="12" fill="#e9edf1" text-anchor="middle">17:38</text>
<text x="1313" y="762" font-size="12" fill="#e9edf1" text-anchor="middle">26.12.2020</text>
<rect x="1352.500" y="729.500" width="13" height="38" fill="#7a8896" stroke="#aab2ba" stroke-opacity=".7"/>
</svg>
</body></html>
